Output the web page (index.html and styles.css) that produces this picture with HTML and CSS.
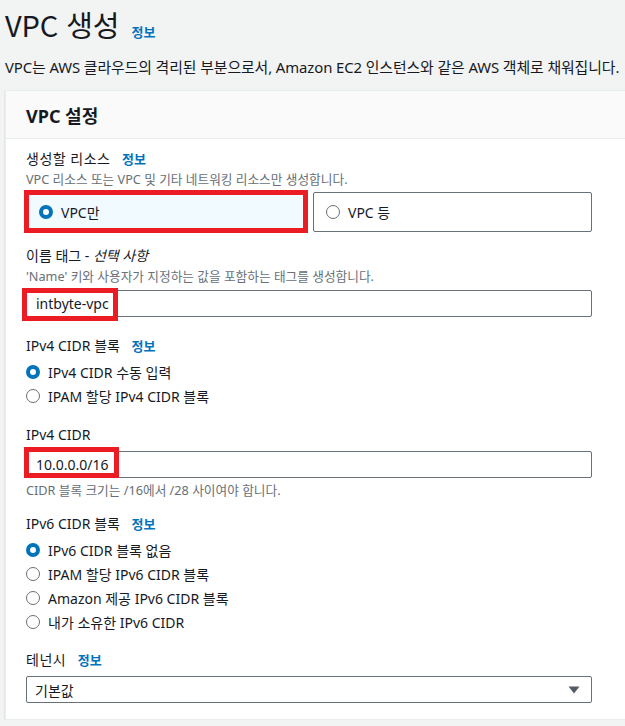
FILE: index.html
```html
<!DOCTYPE html>
<html lang="ko">
<head>
<meta charset="utf-8">
<title>VPC 생성</title>
<link rel="stylesheet" href="styles.css">
</head>
<body>
<div class="page">
  <div class="page-head">
    <h1 class="title">VPC 생성</h1>
    <a class="info info-title">정보</a>
  </div>
  <p class="page-desc">VPC는 AWS 클라우드의 격리된 부분으로서, Amazon EC2 인스턴스와 같은 AWS 객체로 채워집니다.</p>

  <section class="card">
    <header class="card-head"><h2>VPC 설정</h2></header>
    <div class="card-body">

      <div class="field f-resource">
        <div class="label"><span class="lbl-ko">생성할 리소스</span> <a class="info">정보</a></div>
        <div class="desc">VPC 리소스 또는 VPC 및 기타 네트워킹 리소스만 생성합니다.</div>
        <div class="tiles">
          <div class="tile selected">
            <span class="radio on"></span><span>VPC만</span>
            <span class="mark mark-tile"></span>
          </div>
          <div class="tile">
            <span class="radio"></span><span>VPC 등</span>
          </div>
        </div>
      </div>

      <div class="field f-name">
        <div class="label">이름 태그 - <em>선택 사항</em></div>
        <div class="desc">'Name' 키와 사용자가 지정하는 값을 포함하는 태그를 생성합니다.</div>
        <div class="input">intbyte-vpc<span class="mark mark-name"></span></div>
      </div>

      <div class="field f-v4block">
        <div class="label">IPv4 CIDR 블록 <a class="info">정보</a></div>
        <div class="radios">
          <div class="ropt"><span class="radio on"></span>IPv4 CIDR 수동 입력</div>
          <div class="ropt"><span class="radio"></span>IPAM 할당 IPv4 CIDR 블록</div>
        </div>
      </div>

      <div class="field f-v4">
        <div class="label">IPv4 CIDR</div>
        <div class="input">10.0.0.0/16<span class="mark mark-cidr"></span></div>
        <div class="desc desc-after">CIDR 블록 크기는 /16에서 /28 사이여야 합니다.</div>
      </div>

      <div class="field f-v6block">
        <div class="label">IPv6 CIDR 블록 <a class="info">정보</a></div>
        <div class="radios">
          <div class="ropt"><span class="radio on"></span>IPv6 CIDR 블록 없음</div>
          <div class="ropt"><span class="radio"></span>IPAM 할당 IPv6 CIDR 블록</div>
          <div class="ropt"><span class="radio"></span>Amazon 제공 IPv6 CIDR 블록</div>
          <div class="ropt"><span class="radio"></span>내가 소유한 IPv6 CIDR</div>
        </div>
      </div>

      <div class="field f-tenancy">
        <div class="label"><span class="lbl-ko">테넌시</span> <a class="info">정보</a></div>
        <div class="select">
          <span>기본값</span>
          <svg class="caret" width="12" height="8" viewBox="0 0 12 8"><path d="M0.5 0.5 H11.5 L6 7.5 Z" fill="#545b64"/></svg>
        </div>
      </div>

    </div>
  </section>
</div>
</body>
</html>
```

FILE: styles.css
```css
html, body {
  margin: 0;
  padding: 0;
  overflow: hidden;
  background: #f2f3f3;
}
body {
  font-family: "Noto Sans", "Noto Sans CJK KR", sans-serif;
  color: #16191f;
  font-size: 14px;
}
.page {
  padding-left: 5px;
  width: 720px;
}
.page-head {
  display: flex;
  align-items: baseline;
  gap: 12px;
  height: 46px;
  padding-top: 1px;
}
.title {
  margin: 0;
  font-family: "Noto Sans CJK KR", "Noto Sans", sans-serif;
  font-size: 29px;
  font-weight: 400;
  line-height: 46px;
  letter-spacing: -0.1px;
}
.info {
  color: #0073bb;
  font-weight: 700;
  font-size: 13px;
  font-family: "Noto Sans CJK KR", sans-serif;
  margin-left: 8px;
}
.info-title {
  margin-left: 0;
  font-size: 13px;
}
.lbl-ko {
  letter-spacing: 0.5px;
}
.page-desc {
  margin: 9px 0 0;
  line-height: 22px;
  font-size: 14.9px;
  letter-spacing: -0.1px;
  white-space: nowrap;
}
.card {
  margin-top: 12px;
  background: #fff;
  border: 1px solid #eaeded;
  box-shadow: 0 1px 1px rgba(0, 28, 36, 0.3);
  width: 700px;
}
.card-head {
  background: #fafafa;
  border-bottom: 1px solid #eaeded;
  height: 47px;
  display: flex;
  align-items: center;
  padding-left: 20px;
}
.card-head h2 {
  margin: 0;
  font-size: 18px;
  font-weight: 700;
  font-family: "Noto Sans", "Noto Sans CJK KR", sans-serif;
}
.card-body {
  padding: 10px 0 16px 20px;
  width: 566px;
  display: flex;
  flex-direction: column;
}
.label {
  line-height: 20px;
  font-size: 14px;
}
.label em {
  font-style: italic;
}
.desc {
  font-size: 12.7px;
  line-height: 16px;
  color: #687078;
  margin-top: 2px;
  white-space: nowrap;
}
.desc-after {
  margin-top: 4px;
}
.f-name { margin-top: 14px; }
.f-v4block { margin-top: 19px; }
.f-v4 { margin-top: 17px; }
.f-v6block { margin-top: 16px; }
.f-tenancy { margin-top: 16px; }

.tiles {
  margin-top: 5px;
  display: grid;
  grid-template-columns: 1fr 1fr;
  gap: 8px;
}
.tile {
  position: relative;
  height: 38px;
  border: 1px solid #687078;
  border-radius: 2px;
  display: flex;
  align-items: center;
  gap: 8px;
  padding-left: 12px;
  font-size: 14px;
}
.tile.selected {
  background: #f1faff;
  border-color: #0073bb;
}
.radio {
  width: 14px;
  height: 14px;
  box-sizing: border-box;
  border-radius: 50%;
  border: 1.5px solid #687078;
  background: #fff;
  flex: none;
}
.radio.on {
  border: 4px solid #0073bb;
}
.input, .select {
  position: relative;
  margin-top: 6px;
  height: 27px;
  box-sizing: border-box;
  border: 1px solid #687078;
  border-radius: 2px;
  background: #fff;
  display: flex;
  align-items: center;
  padding-left: 9px;
  font-size: 14px;
}
.select {
  justify-content: space-between;
  padding-right: 11px;
  padding-left: 8px;
}
.radios {
  margin-top: 4px;
  display: flex;
  flex-direction: column;
}
.ropt {
  height: 24px;
  display: flex;
  align-items: center;
  gap: 8px;
  font-size: 14px;
}
.mark {
  position: absolute;
  border: 5px solid #ec1c24;
  pointer-events: none;
}
.mark-tile {
  top: -3px;
  left: -3px;
  right: -4px;
  bottom: -2px;
}
.mark-name {
  top: -3px;
  left: -5px;
  bottom: -5px;
  width: 86px;
}
.mark-cidr {
  top: -5px;
  left: -3px;
  bottom: -1px;
  width: 85px;
}
```
